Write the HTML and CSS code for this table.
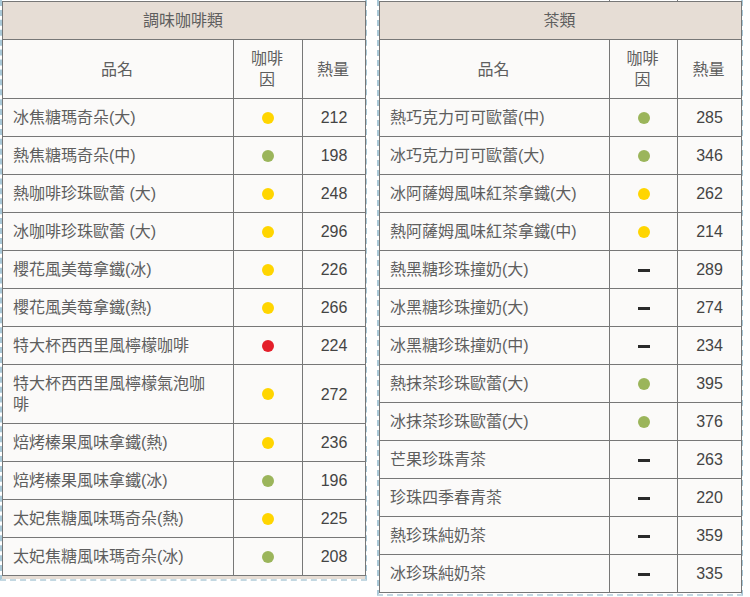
FILE: index.html
```html
<!DOCTYPE html>
<html lang="zh-Hant">
<head>
<meta charset="utf-8">
<title>飲品熱量</title>
<link rel="stylesheet" href="styles.css">
</head>
<body>
<div class="page">
  <section class="panel panel-left">
    <table class="menu">
      <colgroup><col class="c-name-l"><col class="c-caf-l"><col class="c-cal-l"></colgroup>
      <thead>
        <tr><th colspan="3" class="title">調味咖啡類</th></tr>
        <tr><th>品名</th><th>咖啡因</th><th>熱量</th></tr>
      </thead>
      <tbody>
        <tr><td class="name">冰焦糖瑪奇朵(大)</td><td class="caf"><span class="dot yellow"></span></td><td class="cal">212</td></tr>
        <tr><td class="name">熱焦糖瑪奇朵(中)</td><td class="caf"><span class="dot green"></span></td><td class="cal">198</td></tr>
        <tr><td class="name">熱咖啡珍珠歐蕾 (大)</td><td class="caf"><span class="dot yellow"></span></td><td class="cal">248</td></tr>
        <tr><td class="name">冰咖啡珍珠歐蕾 (大)</td><td class="caf"><span class="dot yellow"></span></td><td class="cal">296</td></tr>
        <tr><td class="name">櫻花風美莓拿鐵(冰)</td><td class="caf"><span class="dot yellow"></span></td><td class="cal">226</td></tr>
        <tr><td class="name">櫻花風美莓拿鐵(熱)</td><td class="caf"><span class="dot yellow"></span></td><td class="cal">266</td></tr>
        <tr><td class="name">特大杯西西里風檸檬咖啡</td><td class="caf"><span class="dot red"></span></td><td class="cal">224</td></tr>
        <tr><td class="name">特大杯西西里風檸檬氣泡咖啡</td><td class="caf"><span class="dot yellow"></span></td><td class="cal">272</td></tr>
        <tr><td class="name">焙烤榛果風味拿鐵(熱)</td><td class="caf"><span class="dot yellow"></span></td><td class="cal">236</td></tr>
        <tr><td class="name">焙烤榛果風味拿鐵(冰)</td><td class="caf"><span class="dot green"></span></td><td class="cal">196</td></tr>
        <tr><td class="name">太妃焦糖風味瑪奇朵(熱)</td><td class="caf"><span class="dot yellow"></span></td><td class="cal">225</td></tr>
        <tr><td class="name">太妃焦糖風味瑪奇朵(冰)</td><td class="caf"><span class="dot green"></span></td><td class="cal">208</td></tr>
      </tbody>
    </table>
    <div class="next-strip"></div>
  </section>
  <section class="panel panel-right">
    <div class="prev-edge"><span></span><span></span><span></span></div>
    <table class="menu">
      <colgroup><col class="c-name-r"><col class="c-caf-r"><col class="c-cal-r"></colgroup>
      <thead>
        <tr><th colspan="3" class="title">茶類</th></tr>
        <tr><th>品名</th><th>咖啡因</th><th>熱量</th></tr>
      </thead>
      <tbody>
        <tr><td class="name">熱巧克力可可歐蕾(中)</td><td class="caf"><span class="dot green"></span></td><td class="cal">285</td></tr>
        <tr><td class="name">冰巧克力可可歐蕾(大)</td><td class="caf"><span class="dot green"></span></td><td class="cal">346</td></tr>
        <tr><td class="name">冰阿薩姆風味紅茶拿鐵(大)</td><td class="caf"><span class="dot yellow"></span></td><td class="cal">262</td></tr>
        <tr><td class="name">熱阿薩姆風味紅茶拿鐵(中)</td><td class="caf"><span class="dot yellow"></span></td><td class="cal">214</td></tr>
        <tr><td class="name">熱黑糖珍珠撞奶(大)</td><td class="caf"><span class="dash"></span></td><td class="cal">289</td></tr>
        <tr><td class="name">冰黑糖珍珠撞奶(大)</td><td class="caf"><span class="dash"></span></td><td class="cal">274</td></tr>
        <tr><td class="name">冰黑糖珍珠撞奶(中)</td><td class="caf"><span class="dash"></span></td><td class="cal">234</td></tr>
        <tr><td class="name">熱抹茶珍珠歐蕾(大)</td><td class="caf"><span class="dot green"></span></td><td class="cal">395</td></tr>
        <tr><td class="name">冰抹茶珍珠歐蕾(大)</td><td class="caf"><span class="dot green"></span></td><td class="cal">376</td></tr>
        <tr><td class="name">芒果珍珠青茶</td><td class="caf"><span class="dash"></span></td><td class="cal">263</td></tr>
        <tr><td class="name">珍珠四季春青茶</td><td class="caf"><span class="dash"></span></td><td class="cal">220</td></tr>
        <tr><td class="name">熱珍珠純奶茶</td><td class="caf"><span class="dash"></span></td><td class="cal">359</td></tr>
        <tr><td class="name">冰珍珠純奶茶</td><td class="caf"><span class="dash"></span></td><td class="cal">335</td></tr>
      </tbody>
    </table>
  </section>
</div>
</body>
</html>
```

FILE: styles.css
```css
html, body {
  margin: 0;
  padding: 0;
  background: #ffffff;
}

.page {
  display: flex;
  align-items: flex-start;
  gap: 10px;
  font-family: "Liberation Sans", "Noto Sans CJK TC", sans-serif;
  font-size: 16px;
  color: #5e5e5e;
}

.panel {
  border-left: 2px dashed #a9c8d7;
  border-right: 2px dashed #a9c8d7;
  border-bottom: 2px dashed #c3d8e2;
  background: #ffffff;
}

.panel-left {
  width: 363px;
  padding-top: 1px;
}

.panel-right {
  width: 362px;
  padding-bottom: 1px;
}

.prev-edge {
  height: 1px;
  display: flex;
}
.prev-edge span { display: block; height: 1px; }
.prev-edge span:nth-child(1) { width: 230px; border-right: 1px solid #777; }
.prev-edge span:nth-child(2) { width: 67px; border-right: 1px solid #777; }

.menu {
  width: 100%;
  border-collapse: collapse;
  table-layout: fixed;
  background: #fbfaf9;
}

.c-name-l { width: 231px; }
.c-caf-l { width: 69px; }
.c-cal-l { width: 63px; }
.c-name-r { width: 230px; }
.c-caf-r { width: 68px; }
.c-cal-r { width: 64px; }

.menu th,
.menu td {
  border: 1px solid #777777;
  padding: 8px 12px 8px 10px;
  line-height: 21px;
  font-weight: normal;
  vertical-align: middle;
}

.menu th {
  text-align: center;
}

.menu th.title {
  background: #e6ddd5;
}

.menu td.name {
  text-align: left;
  padding-right: 16px;
}

.menu td.caf,
.menu td.cal {
  text-align: center;
  padding-left: 6px;
  padding-right: 6px;
}

.menu td.cal {
  color: #444444;
}

.dot {
  display: inline-block;
  width: 12px;
  height: 12px;
  border-radius: 50%;
  vertical-align: middle;
  position: relative;
  top: -1px;
}
.dot.yellow { background: #ffd500; }
.dot.green { background: #9bb55b; }
.dot.red { background: #e41f2a; }

.dash {
  display: inline-block;
  width: 12px;
  height: 3px;
  background: #2a2a2a;
  vertical-align: middle;
}

.next-strip {
  height: 3px;
  background: #e6ddd5;
}
```
